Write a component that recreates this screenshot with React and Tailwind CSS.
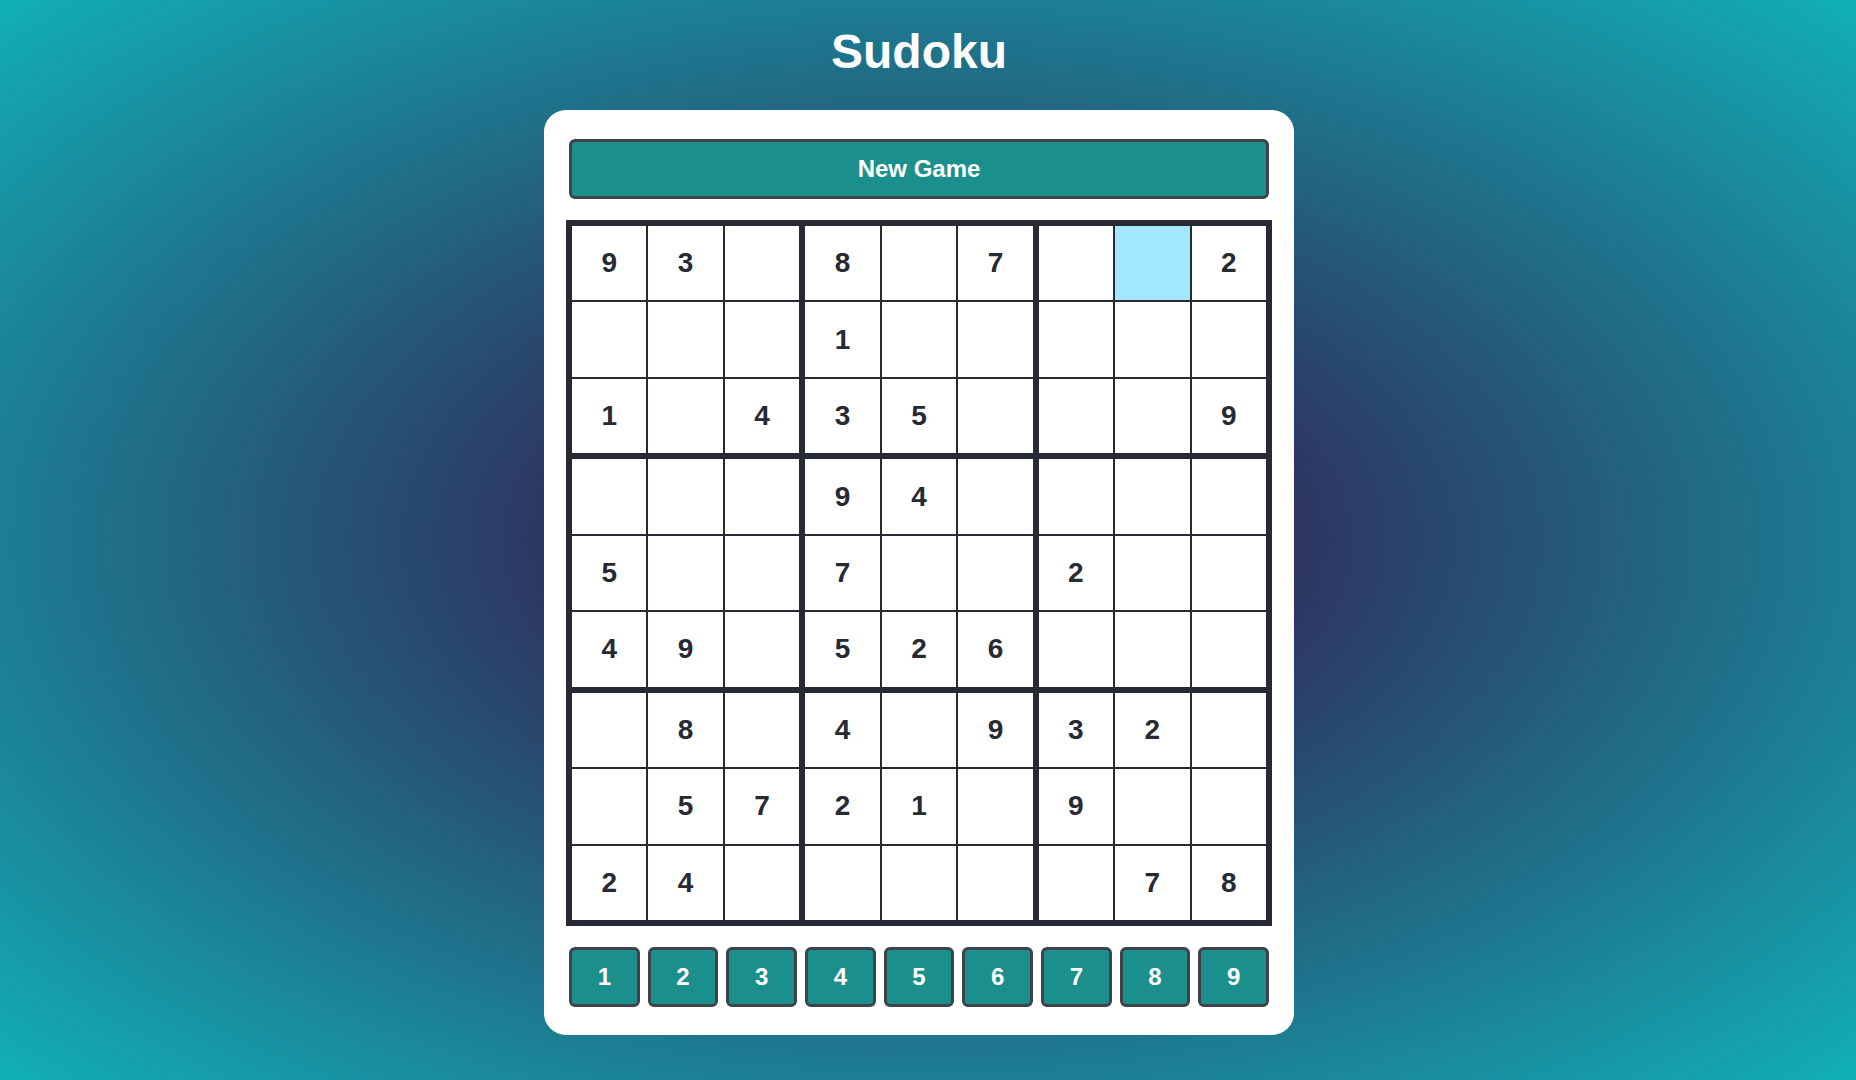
import React from "react";

const PUZZLE = [
  [9, 3, 0, 8, 0, 7, 0, 0, 2],
  [0, 0, 0, 1, 0, 0, 0, 0, 0],
  [1, 0, 4, 3, 5, 0, 0, 0, 9],
  [0, 0, 0, 9, 4, 0, 0, 0, 0],
  [5, 0, 0, 7, 0, 0, 2, 0, 0],
  [4, 9, 0, 5, 2, 6, 0, 0, 0],
  [0, 8, 0, 4, 0, 9, 3, 2, 0],
  [0, 5, 7, 2, 1, 0, 9, 0, 0],
  [2, 4, 0, 0, 0, 0, 0, 7, 8],
];

function Cell({ r, c }) {
  const v = PUZZLE[r][c];
  const hl = r === 0 && c === 7;
  return (
    <div
      className={
        "flex items-center justify-center text-[28px] font-bold text-[#272a33] leading-none " +
        (hl ? "bg-[#a1e8fc]" : "bg-white")
      }
    >
      {v ? v : ""}
    </div>
  );
}

function Box({ br, bc }) {
  const cells = [];
  for (let i = 0; i < 3; i++) {
    for (let j = 0; j < 3; j++) {
      cells.push(<Cell key={`${i}-${j}`} r={br * 3 + i} c={bc * 3 + j} />);
    }
  }
  return <div className="grid grid-cols-3 grid-rows-3 gap-[2px]">{cells}</div>;
}

export default function App() {
  const boxes = [];
  for (let i = 0; i < 3; i++) {
    for (let j = 0; j < 3; j++) {
      boxes.push(<Box key={`${i}-${j}`} br={i} bc={j} />);
    }
  }
  return (
    <div
      className="min-h-screen w-full bg-[radial-gradient(ellipse_at_center,#2d3561_28%,#11b0b6_100%)] pr-[18px] flex flex-col items-center"
      style={{ fontFamily: '"Liberation Sans", Arial, sans-serif' }}
    >
      <h1 className="pt-[28px] text-[48px] leading-[48px] font-bold text-white mb-[34px]">Sudoku</h1>
      <div className="w-[750px] bg-white rounded-[22px] px-[22px] pt-[29px] pb-[28px] flex flex-col">
        <button className="mx-[3px] h-[60px] bg-[#1b8f8b] border-[3px] border-[#3e4249] rounded-[6px] text-white text-[24px] font-bold">
          New Game
        </button>
        <div className="mt-[21px] w-full aspect-square bg-[#272a33] p-[6px] grid grid-cols-3 grid-rows-3 gap-[6px]">
          {boxes}
        </div>
        <div className="mx-[3px] mt-[21px] flex gap-2">
          {[1, 2, 3, 4, 5, 6, 7, 8, 9].map((n) => (
            <button
              key={n}
              className="flex-1 h-[60px] bg-[#1b8f8b] border-[3px] border-[#3e4249] rounded-[6px] text-white text-[24px] font-bold"
            >
              {n}
            </button>
          ))}
        </div>
      </div>
    </div>
  );
}
